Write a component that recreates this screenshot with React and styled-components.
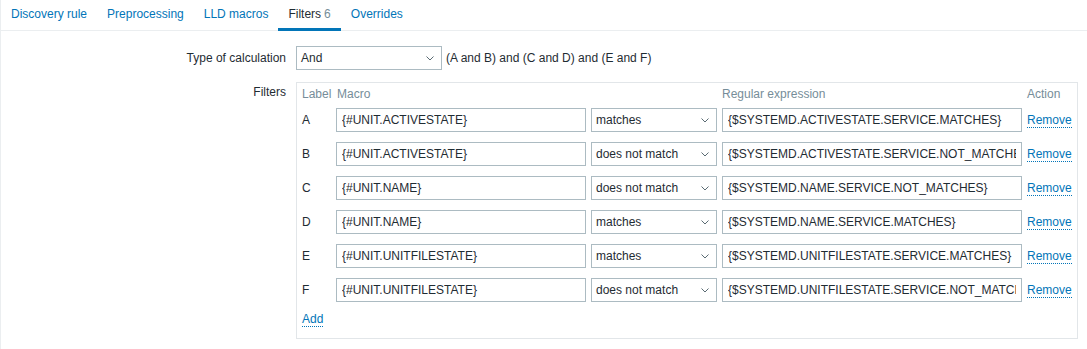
import React from 'react';
import styled, { createGlobalStyle } from 'styled-components';

const textColor = '#1f2c33';
const mutedColor = '#768d99';
const linkColor = '#0275b8';
const inputBorder = '#acbbc2';
const lineColor = '#ebeef0';

const GlobalStyle = createGlobalStyle`
	body {
		margin: 0;
		background: #fff;
		font-family: 'Liberation Sans', Arial, sans-serif;
		font-size: 12px;
		color: ${textColor};
	}
`;

const Page = styled.div`
	min-height: 100vh;
	border-left: 1px solid ${lineColor};
	box-sizing: border-box;
`;

const TabBar = styled.ul`
	display: flex;
	margin: 0;
	padding: 0;
	list-style: none;
	height: 31px;
	box-sizing: border-box;
	border-bottom: 1px solid ${lineColor};
`;

const Tab = styled.li`
	height: 31px;
	box-sizing: border-box;
	padding: 0 10px;
	line-height: 29px;
	border-bottom: 3px solid ${({ active }) => (active ? linkColor : 'transparent')};
	color: ${({ active }) => (active ? textColor : linkColor)};
	cursor: pointer;
`;

const TabCount = styled.span`
	color: ${mutedColor};
	margin-left: 3px;
`;

const Form = styled.div`
	padding-top: 15px;
`;

const FormRow = styled.div`
	display: grid;
	grid-template-columns: 285px auto;
	column-gap: 10px;
	align-items: start;
	margin-top: ${({ spaced }) => (spaced ? '12px' : '0')};
`;

const FieldLabel = styled.label`
	text-align: right;
	line-height: ${({ tall }) => (tall ? '24px' : '14px')};
	padding-top: ${({ tall }) => (tall ? '0' : '3px')};
`;

const Inline = styled.div`
	display: flex;
	align-items: center;
`;

const Expression = styled.span`
	margin-left: 4px;
`;

const SelectBox = styled.div`
	display: flex;
	align-items: center;
	justify-content: space-between;
	width: ${({ width }) => width}px;
	height: 24px;
	box-sizing: border-box;
	padding: 0 7px 0 4px;
	border: 1px solid ${inputBorder};
	background: #fff;
	color: ${textColor};
	white-space: nowrap;
`;

const TextInput = styled.input`
	width: ${({ width }) => width}px;
	height: 24px;
	box-sizing: border-box;
	margin: 0;
	padding: 0 5px;
	border: 1px solid ${inputBorder};
	border-radius: 0;
	font-family: inherit;
	font-size: 12px;
	color: ${textColor};
	outline: none;
`;

const FilterBox = styled.div`
	display: inline-block;
	border: 1px solid #e2e6e9;
	padding: 4px 5px 12px 5px;
`;

const Grid = styled.div`
	display: grid;
	grid-template-columns: 29px 250px 126px 300px auto;
	column-gap: 5px;
	row-gap: 10px;
	align-items: center;
`;

const HeadCell = styled.div`
	color: ${mutedColor};
	line-height: 14px;
	margin-bottom: -3px;
	padding-left: ${({ shift }) => (shift ? '1px' : '0')};
`;

const Link = styled.a`
	color: ${linkColor};
	text-decoration: none;
	border-bottom: 1px dotted ${linkColor};
	line-height: 14px;
	cursor: pointer;
	justify-self: start;
`;

const AddRow = styled.div`
	margin-top: 10px;
	line-height: 14px;
`;

const Chevron = () => (
	<svg width="8" height="5" viewBox="0 0 8 5" fill="none">
		<path d="M0.5 0.5 L4 4 L7.5 0.5" stroke="#5a6b73" strokeWidth="1" />
	</svg>
);

const Select = ({ value, width }) => (
	<SelectBox width={width}>
		<span>{value}</span>
		<Chevron />
	</SelectBox>
);

const tabs = [
	{ name: 'Discovery rule' },
	{ name: 'Preprocessing' },
	{ name: 'LLD macros' },
	{ name: 'Filters', count: 6, active: true },
	{ name: 'Overrides' },
];

const filters = [
	{ label: 'A', macro: '{#UNIT.ACTIVESTATE}', op: 'matches', value: '{$SYSTEMD.ACTIVESTATE.SERVICE.MATCHES}' },
	{ label: 'B', macro: '{#UNIT.ACTIVESTATE}', op: 'does not match', value: '{$SYSTEMD.ACTIVESTATE.SERVICE.NOT_MATCHES}' },
	{ label: 'C', macro: '{#UNIT.NAME}', op: 'does not match', value: '{$SYSTEMD.NAME.SERVICE.NOT_MATCHES}' },
	{ label: 'D', macro: '{#UNIT.NAME}', op: 'matches', value: '{$SYSTEMD.NAME.SERVICE.MATCHES}' },
	{ label: 'E', macro: '{#UNIT.UNITFILESTATE}', op: 'matches', value: '{$SYSTEMD.UNITFILESTATE.SERVICE.MATCHES}' },
	{ label: 'F', macro: '{#UNIT.UNITFILESTATE}', op: 'does not match', value: '{$SYSTEMD.UNITFILESTATE.SERVICE.NOT_MATCHES}' },
];

export default function App() {
	return (
		<>
			<GlobalStyle />
			<Page>
				<TabBar>
					{tabs.map(t => (
						<Tab key={t.name} active={t.active}>
							{t.name}
							{t.count && <TabCount>{t.count}</TabCount>}
						</Tab>
					))}
				</TabBar>
				<Form>
					<FormRow>
						<FieldLabel tall>Type of calculation</FieldLabel>
						<Inline>
							<Select value="And" width={146} />
							<Expression>(A and B) and (C and D) and (E and F)</Expression>
						</Inline>
					</FormRow>
					<FormRow spaced>
						<FieldLabel>Filters</FieldLabel>
						<div>
							<FilterBox>
								<Grid>
									<HeadCell>Label</HeadCell>
									<HeadCell shift>Macro</HeadCell>
									<HeadCell />
									<HeadCell>Regular expression</HeadCell>
									<HeadCell>Action</HeadCell>
									{filters.map(f => (
										<React.Fragment key={f.label}>
											<span>{f.label}</span>
											<TextInput width={250} defaultValue={f.macro} readOnly />
											<Select value={f.op} width={126} />
											<TextInput width={300} defaultValue={f.value} readOnly />
											<Link>Remove</Link>
										</React.Fragment>
									))}
								</Grid>
								<AddRow>
									<Link>Add</Link>
								</AddRow>
							</FilterBox>
						</div>
					</FormRow>
				</Form>
			</Page>
		</>
	);
}
